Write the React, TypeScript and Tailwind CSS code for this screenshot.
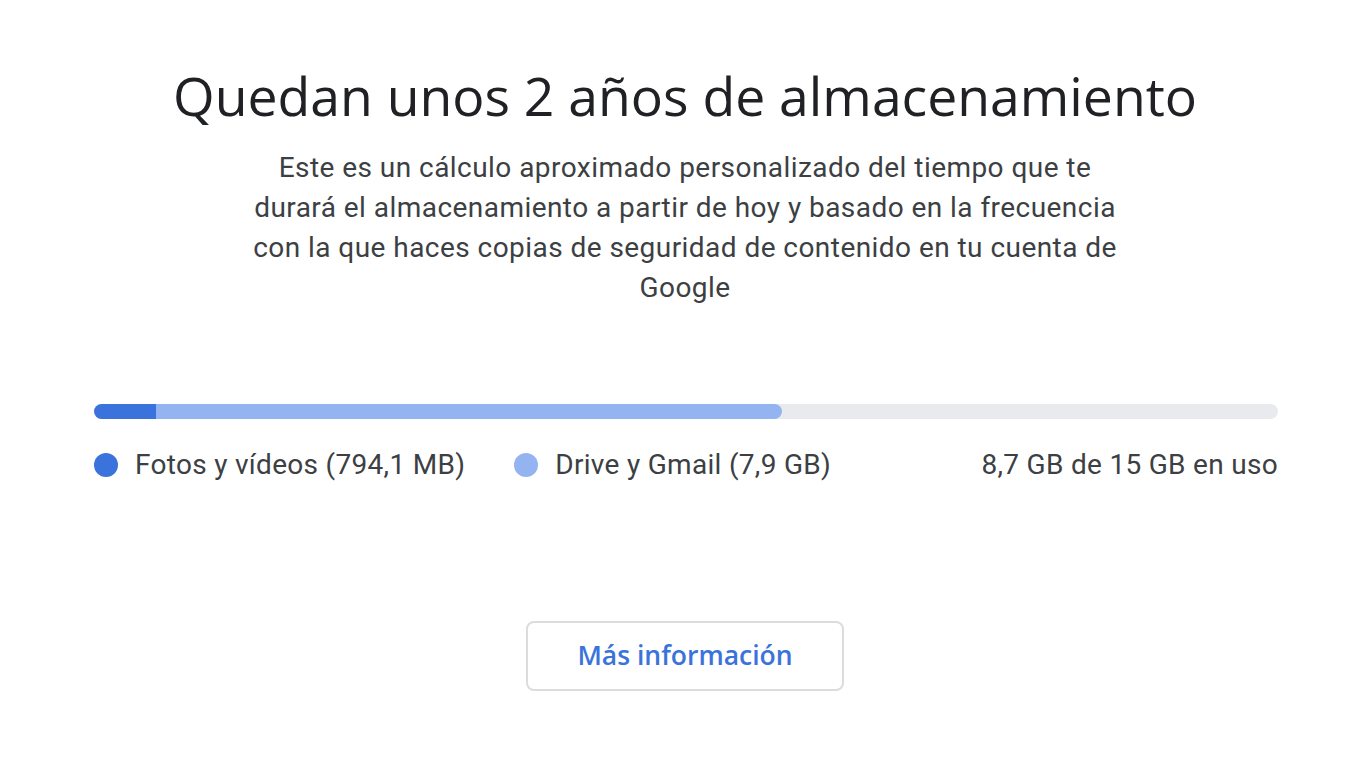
export default function App() {
  return (
    <div className="min-h-[782px] w-full bg-white flex flex-col items-center">
      <h1 className="mt-[64px] text-[53.5px] leading-[64px] text-[#202124] font-['Open_Sans',sans-serif]">
        Quedan unos 2 años de almacenamiento
      </h1>
      <p className="mt-[20px] w-[868px] text-center text-[28px] leading-[40px] text-[#3c4043] font-['Roboto',sans-serif] tracking-[0.45px]">
        Este es un cálculo aproximado personalizado del tiempo que te durará el almacenamiento a partir de hoy y basado en la frecuencia con la que haces copias de seguridad de contenido en tu cuenta de Google
      </p>

      <div className="mt-[96px] w-full pr-[92px] pl-[94px]">
        <div className="flex h-[15px] w-full rounded-full bg-[#e8eaed] overflow-hidden">
          <div className="w-[62px] bg-[#3b73dc]" />
          <div className="w-[626px] bg-[#94b4f1] rounded-r-full" />
        </div>
        <div className="mt-[30px] flex items-center text-[28px] leading-[32px] text-[#3c4043] font-['Roboto',sans-serif] tracking-[0.3px]">
          <span className="h-[24px] w-[24px] rounded-full bg-[#3b73dc]" />
          <span className="ml-[17px]">Fotos y vídeos (794,1 MB)</span>
          <span className="ml-[49px] h-[24px] w-[24px] rounded-full bg-[#94b4f1]" />
          <span className="ml-[17px]">Drive y Gmail (7,9 GB)</span>
          <span className="ml-auto">8,7 GB de 15 GB en uso</span>
        </div>
      </div>

      <button className="mt-[140px] h-[70px] w-[318px] rounded-[8px] border-2 border-[#dadce0] bg-white text-[26.5px] font-semibold text-[#3b73dc] font-['Open_Sans',sans-serif]">
        Más información
      </button>
    </div>
  );
}
